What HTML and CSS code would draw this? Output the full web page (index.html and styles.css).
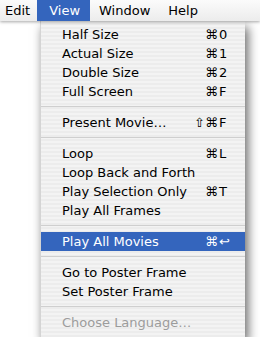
FILE: index.html
```html
<!DOCTYPE html>
<html lang="en">
<head>
    <meta charset="UTF-8">
    <title>View menu</title>
    <link rel="stylesheet" href="styles.css">
</head>
<body>
    <div class="menubar">
        <span class="title first">Edit</span>
        <span class="title open">View</span>
        <span class="title">Window</span>
        <span class="title">Help</span>
    </div>

    <div class="menu">
        <div class="item"><span>Half Size</span><span class="keys"><span class="mods">⌘</span><span class="key">0</span></span></div>
        <div class="item"><span>Actual Size</span><span class="keys"><span class="mods">⌘</span><span class="key">1</span></span></div>
        <div class="item"><span>Double Size</span><span class="keys"><span class="mods">⌘</span><span class="key">2</span></span></div>
        <div class="item"><span>Full Screen</span><span class="keys"><span class="mods">⌘</span><span class="key">F</span></span></div>
        <div class="sep"></div>
        <div class="item"><span>Present Movie…</span><span class="keys"><span class="mods">⇧⌘</span><span class="key">F</span></span></div>
        <div class="sep"></div>
        <div class="item"><span>Loop</span><span class="keys"><span class="mods">⌘</span><span class="key">L</span></span></div>
        <div class="item"><span>Loop Back and Forth</span></div>
        <div class="item"><span>Play Selection Only</span><span class="keys"><span class="mods">⌘</span><span class="key">T</span></span></div>
        <div class="item"><span>Play All Frames</span></div>
        <div class="sep"></div>
        <div class="item selected"><span>Play All Movies</span><span class="keys"><span class="mods">⌘</span><span class="key">↩</span></span></div>
        <div class="sep"></div>
        <div class="item"><span>Go to Poster Frame</span></div>
        <div class="item"><span>Set Poster Frame</span></div>
        <div class="sep"></div>
        <div class="item disabled"><span>Choose Language…</span></div>
    </div>
</body>
</html>
```

FILE: styles.css
```css
body {
    margin: 0;
    background: #ffffff;
    font-family: 'DejaVu Sans', 'Liberation Sans', sans-serif;
    font-size: 13px;
    color: #000;
}
.menubar {
    display: flex;
    height: 21px;
    background: linear-gradient(#fbfbfb, #ececec);
    box-shadow: 0 1px 3px rgba(0,0,0,0.35);
    position: relative;
    z-index: 1;
}
.title {
    display: flex;
    align-items: center;
    padding: 0 9px;
}
.title.first {
    padding: 0 7px 0 5px;
}
.title.open {
    background: #3465bd;
    color: #fff;
    padding: 0 10px 0 12px;
}
.menu {
    width: 204px;
    margin-left: 40px;
    padding: 4px 0 5px;
    border-left: 1px solid #d4d4d4;
    background: repeating-linear-gradient(#f3f3f3 0, #f3f3f3 2px, #ececec 2px, #ececec 4px);
    box-shadow: 3px 6px 10px rgba(0,0,0,0.6);
}
.item {
    display: flex;
    justify-content: space-between;
    align-items: center;
    height: 19px;
    padding: 0 14px 0 21px;
}
.item.selected {
    background: #3465bd;
    color: #fff;
}
.item.disabled {
    color: #9c9c9c;
}
.keys {
    display: flex;
}
.mods {
    text-align: right;
    margin-right: 1px;
}
.key {
    width: 12px;
}
.sep {
    height: 1px;
    margin: 5px 0 6px;
    background: #cfcfcf;
}
```
